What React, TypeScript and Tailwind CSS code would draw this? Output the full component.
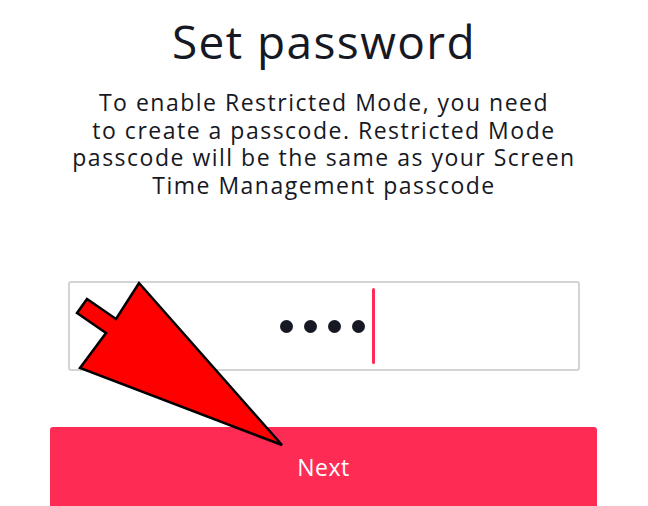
import { ChangeEvent, useState } from "react";

const font = { fontFamily: '"Open Sans", "Liberation Sans", sans-serif' };

function PointerArrow() {
  return (
    <svg
      className="pointer-events-none absolute left-0 top-0"
      width="648"
      height="506"
      viewBox="0 0 648 506"
    >
      <polygon
        points="282,445 139,283 116,319 87,299 77,313 106,333 80,368"
        fill="#ff0000"
        stroke="#000"
        strokeWidth="2.5"
        strokeLinejoin="miter"
      />
    </svg>
  );
}

export default function App() {
  const [code, setCode] = useState("1234");

  const onChange = (e: ChangeEvent<HTMLInputElement>) => setCode(e.target.value.slice(0, 4));

  return (
    <div className="relative h-[506px] w-[648px] overflow-hidden bg-white text-[#161823]" style={font}>
      <div className="flex flex-col items-center">
        <h1 className="mt-[13px] text-[46px] leading-[56px] font-normal tracking-[1.4px]">Set password</h1>
        <p className="mt-[20px] w-[620px] text-center text-[23px] leading-[27.5px] tracking-[1.5px]">
          To enable Restricted Mode, you need
          <br />
          to create a passcode. Restricted Mode
          <br />
          passcode will be the same as your Screen
          <br />
          Time Management passcode
        </p>
      </div>

      <label className="mx-[68px] mt-[82px] flex h-[90px] items-center justify-center rounded-[3px] border-2 border-[#d4d4d6] bg-white">
        <input className="sr-only" type="password" value={code} onChange={onChange} aria-label="Passcode" />
        <span className="flex items-center gap-[11px] pl-[6px]">
          {code.split("").map((_, i) => (
            <span key={i} className="size-[13px] rounded-full bg-[#161823]" />
          ))}
        </span>
        <span className="ml-[7px] h-[76px] w-[3px] rounded-full bg-[#fe2c55]" />
      </label>

      <button className="mx-[50px] mt-[56px] flex h-[90px] w-[547px] items-start justify-center rounded-[3px] bg-[#fe2c55] pt-[23px] text-[23px] tracking-[0.5px] text-white">
        Next
      </button>

      <PointerArrow />
    </div>
  );
}
